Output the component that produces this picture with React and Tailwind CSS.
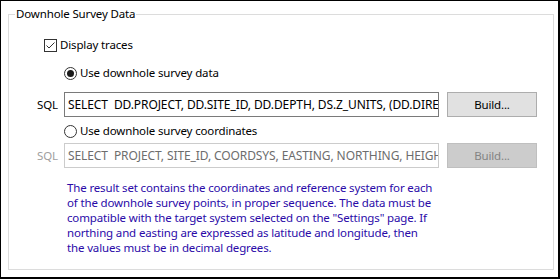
import React from 'react';

const font = { fontFamily: '"Noto Sans", "Open Sans", sans-serif' };

function CheckBox() {
  return (
    <svg width="13" height="13" viewBox="0 0 13 13" className="shrink-0">
      <rect x="0.5" y="0.5" width="12" height="12" fill="#fff" stroke="#333" />
      <path d="M2.5 6.5 L5 9 L10.5 3.5" fill="none" stroke="#333" strokeWidth="1" />
    </svg>
  );
}

function Radio({ checked }) {
  return (
    <svg width="13" height="13" viewBox="0 0 13 13" className="shrink-0">
      <circle cx="6.5" cy="6.5" r="6" fill="#fff" stroke="#333" />
      {checked ? <circle cx="6.5" cy="6.5" r="3.5" fill="#1a1a1a" /> : null}
    </svg>
  );
}

function SqlRow({ text, disabled }) {
  return (
    <div className="flex items-center">
      <span className={`w-[19px] shrink-0 whitespace-nowrap text-[11.5px] ${disabled ? 'text-[#a0a0a0]' : 'text-black'}`}>SQL</span>
      <div
        className={`ml-[8px] h-[25px] w-[375px] shrink-0 overflow-hidden whitespace-pre border pl-[3px] text-[12px] leading-[23px] tracking-[-0.1px] ${
          disabled ? 'border-[#cccccc] text-[#6d6d6d]' : 'border-[#7a7a7a] text-black'
        }`}
      >
        {text}
      </div>
      <div
        className={`ml-[8px] flex h-[25px] w-[90px] shrink-0 items-center justify-center border text-[11.5px] ${
          disabled ? 'border-[#bfbfbf] bg-[#cccccc] text-[#838383]' : 'border-[#adadad] bg-[#e1e1e1] text-black'
        }`}
      >
        Build...
      </div>
    </div>
  );
}

export default function App() {
  return (
    <div
      className="h-[279px] w-[560px] overflow-hidden border-b-2 border-l border-r-2 border-t border-black bg-white pl-[7px] pt-[13px] text-[11.5px] tracking-[-0.15px] text-black"
      style={font}
    >
      <div className="relative h-[256px] w-[546px] border border-[#dcdcdc]">
        <div className="absolute left-[6px] top-[-9px] bg-white px-[1px] leading-[16px]">Downhole Survey Data</div>

        <div className="pl-[35px] pt-[22px]">
          <div className="flex h-[16px] items-center gap-[3px]">
            <CheckBox />
            <span>Display traces</span>
          </div>
          <div className="mt-[12px] flex h-[16px] items-center gap-[3px] pl-[20px]">
            <Radio checked />
            <span>Use downhole survey data</span>
          </div>
        </div>

        <div className="mt-[11px] pl-[28px]">
          <SqlRow text="SELECT  DD.PROJECT, DD.SITE_ID, DD.DEPTH, DS.Z_UNITS, (DD.DIRECTION, DD.INCLINATION" />
        </div>

        <div className="mt-[6px] flex h-[16px] items-center gap-[3px] pl-[55px]">
          <Radio />
          <span>Use downhole survey coordinates</span>
        </div>

        <div className="mt-[4px] pl-[28px]">
          <SqlRow disabled text="SELECT  PROJECT, SITE_ID, COORDSYS, EASTING, NORTHING, HEIGHT, DEPTH" />
        </div>

        <p className="mt-[12px] w-[470px] pl-[58px] leading-[15px] text-[#2a0aa8]">
          The result set contains the coordinates and reference system for each
          <br />
          of the downhole survey points, in proper sequence. The data must be
          <br />
          compatible with the target system selected on the "Settings" page. If
          <br />
          northing and easting are expressed as latitude and longitude, then
          <br />
          the values must be in decimal degrees.
        </p>
      </div>
    </div>
  );
}
